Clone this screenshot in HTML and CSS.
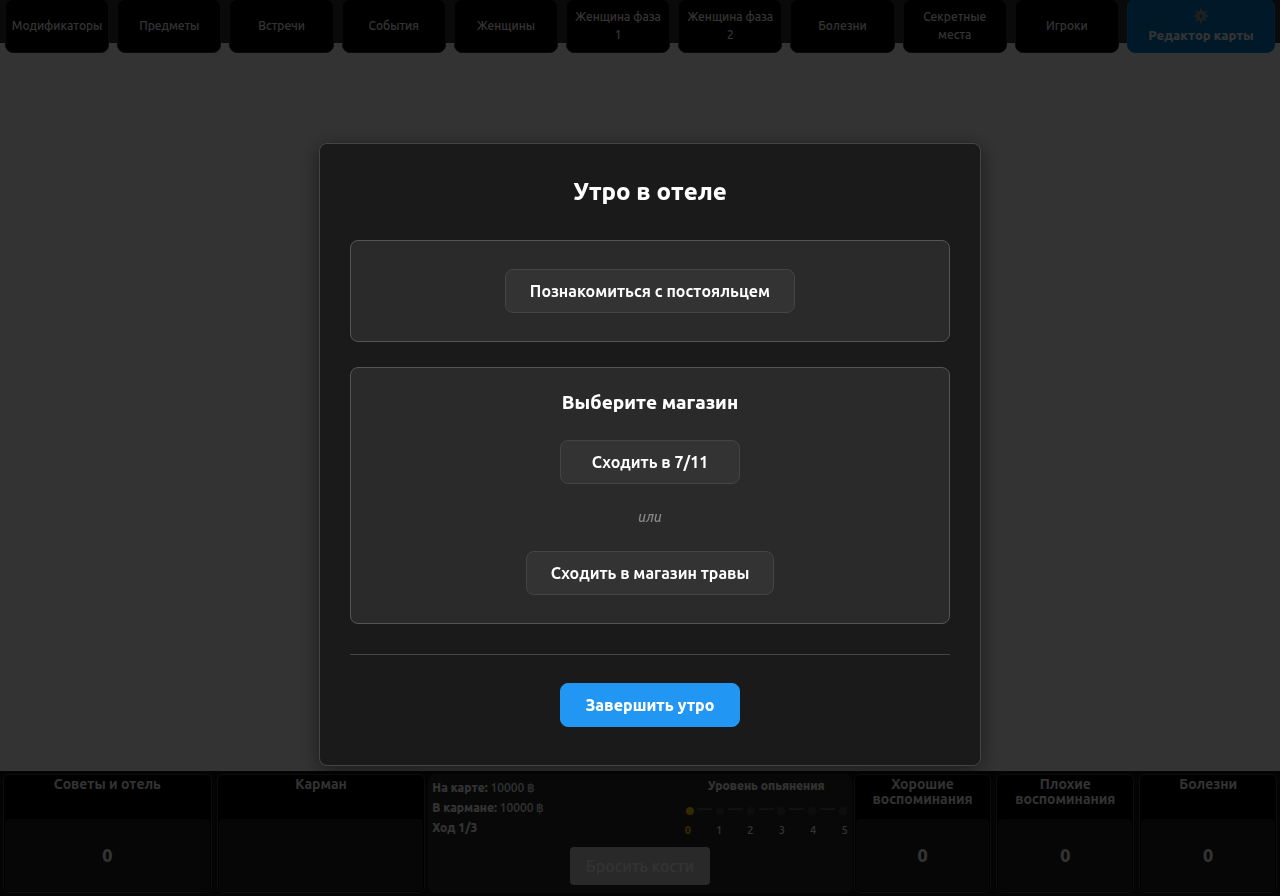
FILE: index.html
```html
<!DOCTYPE html>
<html lang="ru">
<head>
<meta charset="utf-8">
<meta name="viewport" content="width=device-width, initial-scale=1">
<title>Утро в отеле</title>
<link rel="stylesheet" href="styles.css">
</head>
<body>
<div class="game">
  <nav class="topbar">
    <button class="tab" type="button">Модификаторы</button>
    <button class="tab" type="button">Предметы</button>
    <button class="tab" type="button">Встречи</button>
    <button class="tab" type="button">События</button>
    <button class="tab" type="button">Женщины</button>
    <button class="tab" type="button">Женщина фаза 1</button>
    <button class="tab" type="button">Женщина фаза 2</button>
    <button class="tab" type="button">Болезни</button>
    <button class="tab" type="button">Секретные места</button>
    <button class="tab" type="button">Игроки</button>
    <button class="tab tab-editor" type="button">
      <svg class="gear" viewBox="0 0 16 16" aria-hidden="true">
        <g stroke="currentColor" stroke-width="2" stroke-linecap="round">
          <path d="M8 1.500v2.500M8 12v2.500M1.500 8h2.500M12 8h2.500M3.400 3.400l1.600 1.600M11 11l1.600 1.600M12.600 3.400l-1.600 1.600M5 11l-1.600 1.600"/>
        </g>
        <circle cx="8" cy="8" r="3.400" fill="none" stroke="currentColor" stroke-width="3.200"/>
      </svg>
      <span>Редактор карты</span>
    </button>
  </nav>
  <main class="board"></main>
  <footer class="dock">
    <section class="card"><h2 class="card-title">Советы и отель</h2><div class="card-body">0</div></section>
    <section class="card"><h2 class="card-title">Карман</h2><div class="card-body"></div></section>
    <section class="status">
      <div class="status-row">
        <div class="money">
          <div><b>На карте:</b> 10000 ฿</div>
          <div><b>В кармане:</b> 10000 ฿</div>
          <div><b>Ход 1/3</b></div>
        </div>
        <div class="level">
          <h2 class="level-title">Уровень опьянения</h2>
          <div class="level-track">
            <i class="dot dot-on"></i><i class="dash"></i><i class="dot"></i><i class="dash"></i><i class="dot"></i><i class="dash"></i><i class="dot"></i><i class="dash"></i><i class="dot"></i><i class="dash"></i><i class="dot"></i>
          </div>
          <div class="level-numbers"><b>0</b><span>1</span><span>2</span><span>3</span><span>4</span><span>5</span></div>
        </div>
      </div>
      <button class="dice" type="button" disabled>Бросить кости</button>
    </section>
    <section class="card"><h2 class="card-title">Хорошие воспоминания</h2><div class="card-body">0</div></section>
    <section class="card"><h2 class="card-title">Плохие воспоминания</h2><div class="card-body">0</div></section>
    <section class="card"><h2 class="card-title">Болезни</h2><div class="card-body">0</div></section>
  </footer>
</div>
<div class="overlay">
  <div class="modal" role="dialog" aria-modal="true" aria-labelledby="modal-title">
    <h1 class="modal-title" id="modal-title">Утро в отеле</h1>
    <section class="panel">
      <button class="action" type="button">Познакомиться с постояльцем</button>
    </section>
    <section class="panel">
      <h2 class="panel-title">Выберите магазин</h2>
      <button class="action" type="button">Сходить в 7/11</button>
      <p class="or">или</p>
      <button class="action" type="button">Сходить в магазин травы</button>
    </section>
    <div class="modal-footer">
      <button class="action action-primary" type="button">Завершить утро</button>
    </div>
  </div>
</div>
</body>
</html>
```
FILE: styles.css
```css
* { box-sizing: border-box; }
body, h1, h2, p { margin: 0; }
body, button { font-family: Ubuntu, "Noto Sans", "Open Sans", sans-serif; }
h1, h2, b { font-weight: 800; }

.game {
  display: flex;
  flex-direction: column;
  height: 100vh;
  overflow: hidden;
  background: #fff;
  color: #fff;
}

.topbar {
  display: flex;
  align-items: flex-start;
  gap: 8px;
  height: 43px;
  padding: 0 5px;
  background: #333;
}
.tab {
  flex: 1 1 0;
  min-width: 0;
  height: 54px;
  margin-top: -1px;
  padding: 0 5px;
  border: 1px solid #333;
  border-radius: 8px;
  background: #000;
  color: #fff;
  font-size: 12px;
  font-weight: 500;
  line-height: 18px;
}
.tab-editor {
  display: flex;
  flex: 0 0 148px;
  flex-direction: column;
  align-items: center;
  justify-content: center;
  gap: 2px;
  border-color: #0096f0;
  background: #0078c8;
  font-size: 13px;
  font-weight: 800;
}
.gear { width: 16px; height: 16px; color: #96a0a0; }

.board { flex: 1; }

.dock {
  display: grid;
  grid-template-columns: 209fr 209fr 419fr 138fr 138fr 138fr;
  gap: 5px;
  height: 125px;
  padding: 3px;
  background: #141414;
}
.card {
  display: flex;
  flex-direction: column;
  min-width: 0;
  padding: 1px;
  border: 1px solid #444;
  border-radius: 6px;
  background: #000;
  text-align: center;
}
.card-title {
  height: 43px;
  padding-top: 1px;
  font-size: 14px;
  font-weight: 700;
  line-height: 15px;
}
.card-body {
  display: flex;
  flex: 1;
  align-items: center;
  justify-content: center;
  border-radius: 4px;
  background: #222;
  font-size: 18px;
  font-weight: 800;
}
.status {
  display: flex;
  flex-direction: column;
  justify-content: space-between;
  align-items: center;
  margin: 0 -3px 0 -2px;
  padding: 4px 4px 8px;
  border-radius: 6px;
  background: #2a2a2a;
}
.status-row { display: flex; justify-content: space-between; align-self: stretch; }
.money { font-size: 12px; font-weight: 500; line-height: 20px; }
.level { width: 163px; }
.level-title { font-size: 12px; line-height: 16px; text-align: center; }
.level-track { display: flex; align-items: center; justify-content: space-between; height: 34px; padding: 0 1px; }
.dot { width: 8px; height: 8px; border-radius: 50%; background: #444; }
.dot-on { background: #ffd700; }
.dash { width: 15px; height: 2px; margin-bottom: 4px; background: #555; }
.level-numbers { display: flex; justify-content: space-between; font-size: 11px; font-weight: 500; line-height: 4px; }
.level-numbers b { color: #ffd700; }
.dice {
  width: 140px;
  height: 38px;
  padding: 0;
  border: 0;
  border-radius: 4px;
  background: #ccc;
  color: #fff;
  font-size: 16px;
  font-weight: 500;
}

.overlay {
  position: fixed;
  inset: 0;
  display: flex;
  align-items: center;
  justify-content: center;
  padding: 13px 0 0 20px;
  background: rgba(0, 0, 0, .8);
  color: #fff;
}
.modal {
  width: 662px;
  max-width: 100%;
  padding: 30px;
  border: 1px solid #444;
  border-radius: 8px;
  background: #1a1a1a;
  box-shadow: 0 4px 20px rgba(0, 0, 0, .5);
  text-align: center;
}
.modal-title { margin-bottom: 30px; font-size: 24px; line-height: 36px; }
.panel {
  display: flex;
  flex-direction: column;
  align-items: center;
  margin-bottom: 25px;
  padding: 20px;
  border: 1px solid #555;
  border-radius: 8px;
  background: #2a2a2a;
}
.panel-title { margin-bottom: 16px; font-size: 19px; line-height: 28px; }
.action {
  min-width: 180px;
  height: 44px;
  margin: 8px;
  padding: 0 24px;
  border: 1px solid #444;
  border-radius: 8px;
  background: #333;
  color: #fff;
  font-size: 16px;
  font-weight: 600;
}
.or { margin: 15px 0; color: #888; font-size: 14px; font-style: italic; font-weight: 500; line-height: 21px; }
.modal-footer { margin-top: 30px; padding-top: 20px; border-top: 1px solid #444; }
.action-primary { border-color: #2196f3; background: #2196f3; font-weight: 800; }
```
